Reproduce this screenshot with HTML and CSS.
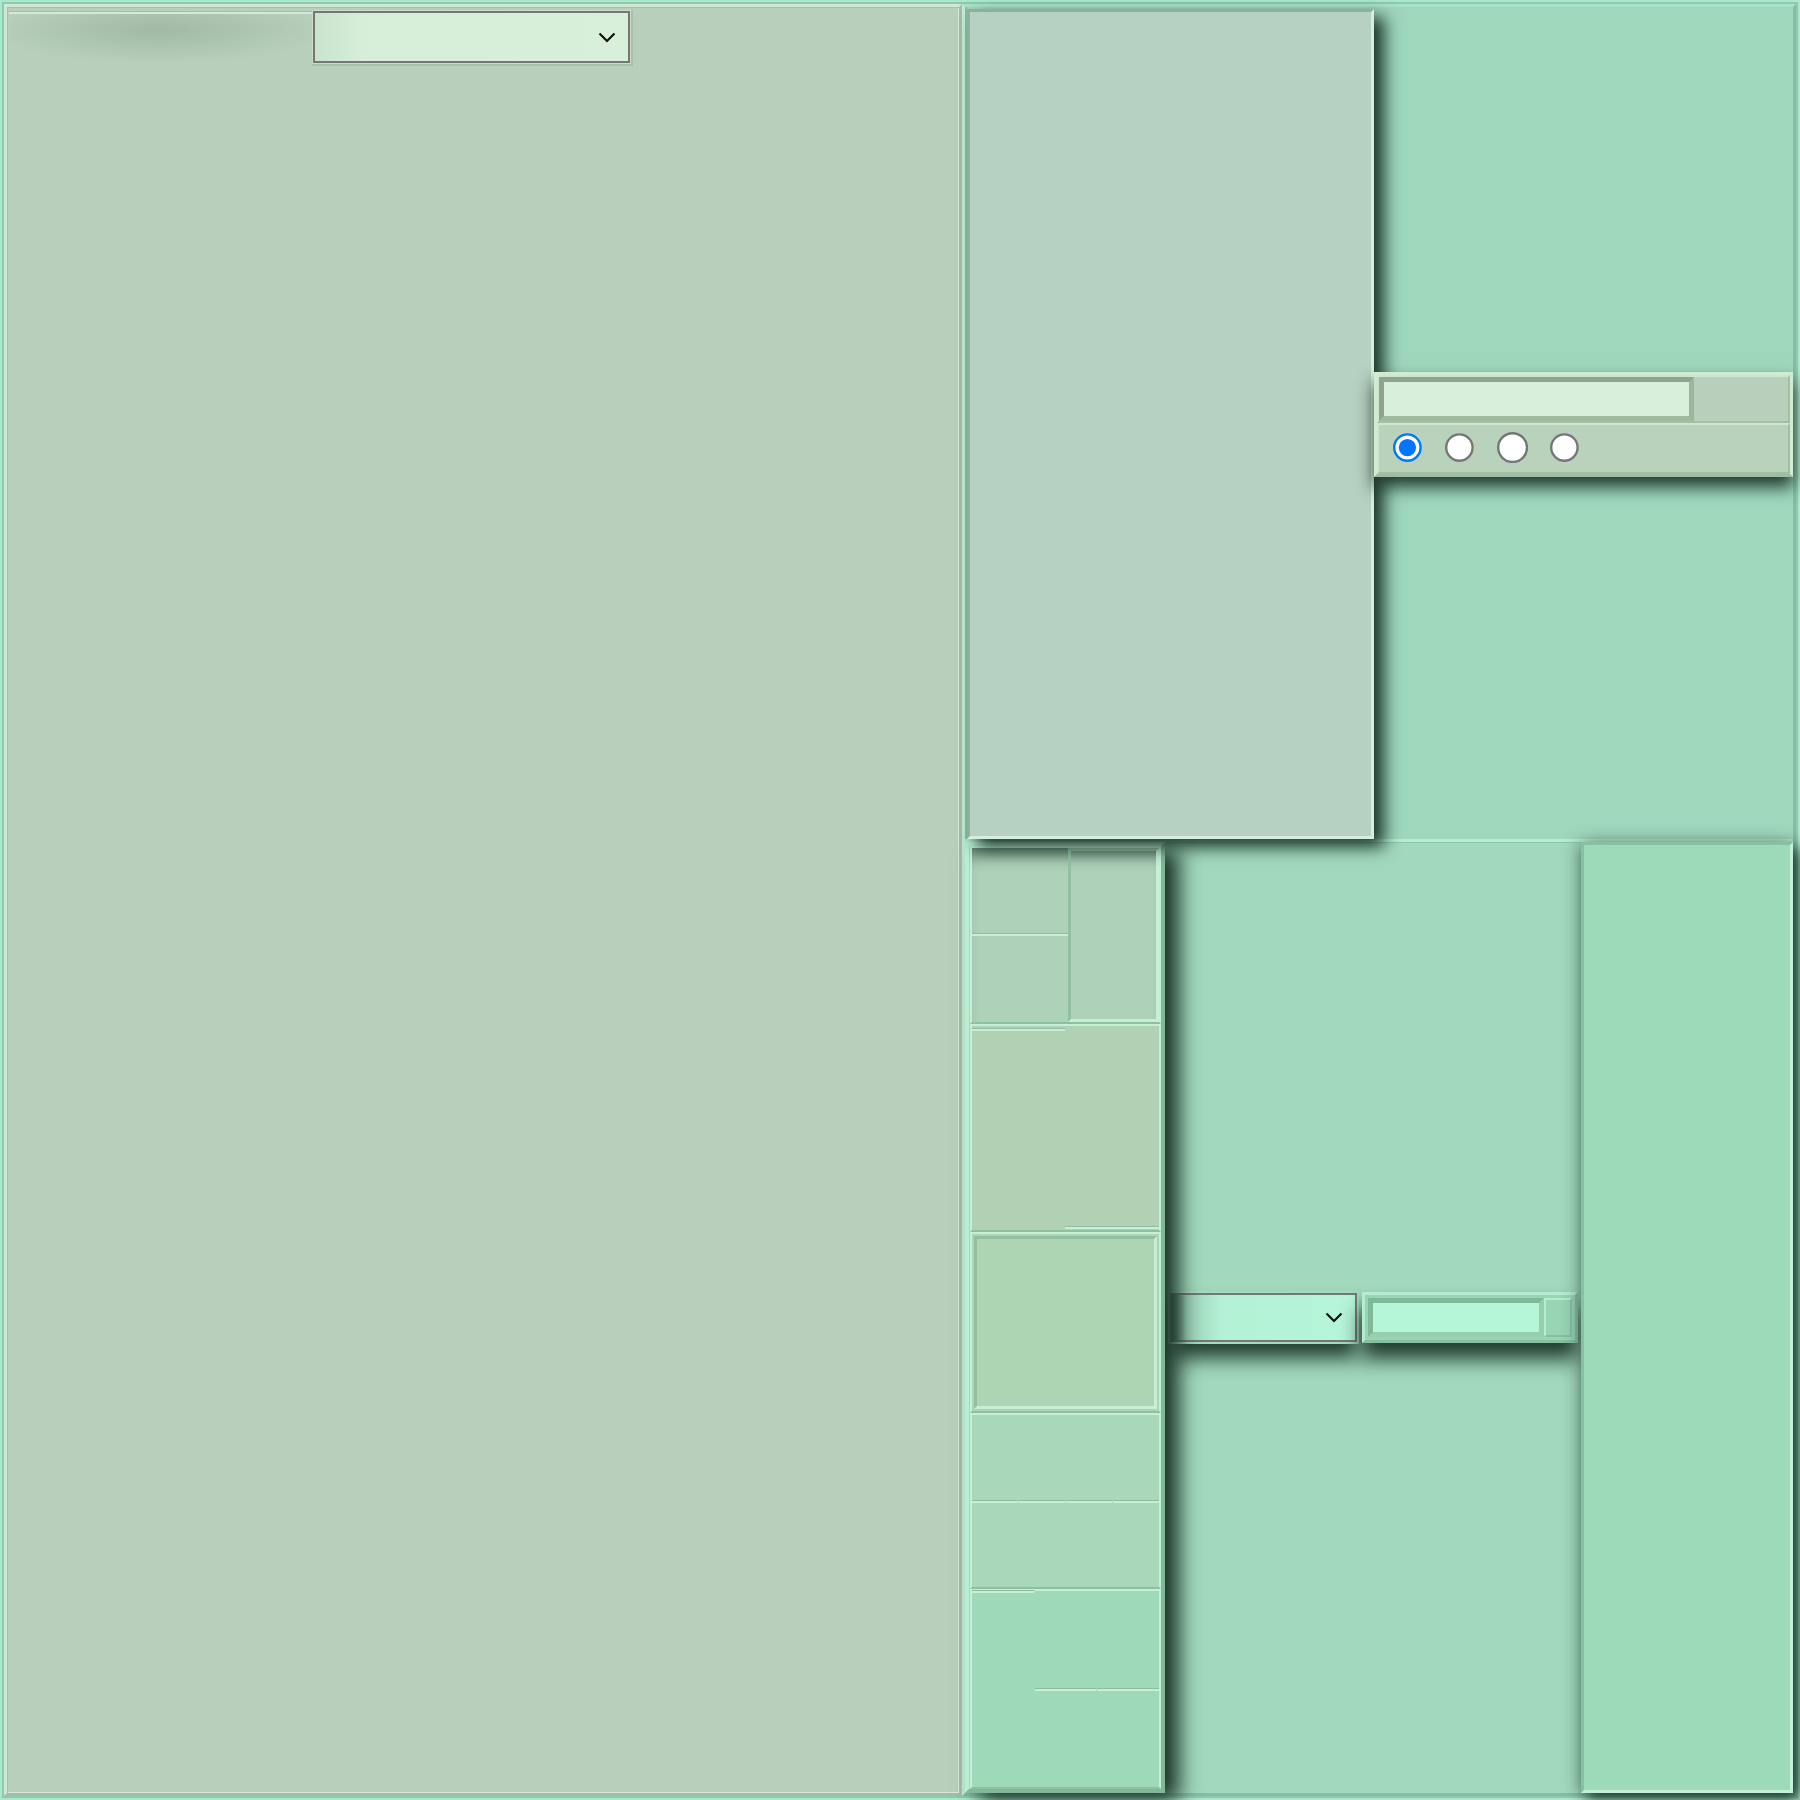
FILE: index.html
```html
<!DOCTYPE html>
<html>
<head>
<meta charset="utf-8">
<link rel="stylesheet" href="styles.css">
</head>
<body>
<div class="root">
  <section class="left">
    <div class="left-head">
      <div class="head-blank"></div>
      <div class="select select-a">
        <svg class="chev" width="18" height="11" viewBox="0 0 18 11"><path d="M1.5 1.5 L9 9 L16.5 1.5" fill="none" stroke="#111" stroke-width="2.2"/></svg>
      </div>
    </div>
  </section>
  <section class="right">
    <div class="right-top">
      <div class="panel-a"></div>
      <div class="widget">
        <div class="w-row w-row1">
          <div class="field field-a"></div>
          <div class="w-cell"></div>
        </div>
        <div class="w-row w-row2">
          <input class="radio" type="radio" name="r" checked>
          <input class="radio" type="radio" name="r">
          <input class="radio" type="radio" name="r">
          <input class="radio" type="radio" name="r">
        </div>
      </div>
    </div>
    <div class="right-bottom">
      <div class="stack">
        <div class="sa">
          <div class="sa-left">
            <div class="sa-cell"></div>
            <div class="sa-cell"></div>
          </div>
          <div class="sa-right"></div>
        </div>
        <div class="sb">
          <div class="mark mark-tl"></div>
          <div class="mark mark-br"></div>
        </div>
        <div class="sc"><div class="sc-inner"></div></div>
        <div class="sd">
          <div class="sd-top"></div>
          <div class="sd-bottom">
            <div class="seg"></div><div class="seg"></div><div class="seg"></div><div class="seg"></div>
          </div>
        </div>
        <div class="se">
          <div class="se-cell se-line"></div><div class="se-cell"></div><div class="se-cell"></div>
          <div class="se-cell"></div><div class="se-cell se-line"></div><div class="se-cell se-line"></div>
        </div>
      </div>
      <div class="mid">
        <div class="select select-b">
          <svg class="chev" width="18" height="11" viewBox="0 0 18 11"><path d="M1.5 1.5 L9 9 L16.5 1.5" fill="none" stroke="#111" stroke-width="2.2"/></svg>
        </div>
        <div class="iw">
          <div class="field field-b"></div>
          <div class="iw-cell"></div>
        </div>
      </div>
      <div class="tall"></div>
    </div>
  </section>
</div>
</body>
</html>
```

FILE: styles.css
```css
* { box-sizing: border-box; }
html, body { margin: 0; padding: 0; }
body { font-family: "Liberation Sans", Arial, sans-serif; background: #9fd8bd; }

.root {
  width: 1800px;
  height: 1800px;
  border: 2px solid #aae8cd;
  box-shadow: inset 0 0 0 2px #8ec8ad;
  padding: 2px;
  background: #9fd8bd;
  display: flex;
}

/* ---------- left ---------- */
.left {
  width: 958px;
  height: 100%;
  border: 3px solid;
  border-color: #cfe8d3 #a3bda7 #a3bda7 #cfe8d3;
  box-shadow: inset 1px 1px 0 #a6bfaa, inset -1px -1px 0 #d2ead6;
  background: #b8d0bb;
  padding: 4px 0 0 2px;
}
.left-head { display: flex; align-items: flex-start; }
.head-blank {
  width: 304px;
  height: 50px;
  border-top: 2px solid #d2ead6;
  box-shadow: 0 -1px 0 #a4bea8;
  margin-top: 1px;
  background: radial-gradient(ellipse 170px 34px at 150px 16px, rgba(150,178,160,0.75), rgba(150,178,160,0) 100%);
}
.select {
  display: flex;
  align-items: center;
  justify-content: flex-end;
  border: 2px solid #767676;
}
.select-a {
  width: 317px;
  height: 52px;
  padding-right: 12px;
  background: linear-gradient(90deg, #c9e3cd 0, #d7efd8 50px, #d8f0da 100%);
  box-shadow: 0 0 0 1px #c9dcc9, 1px 1px 0 2px #a9bfa9;
}

/* ---------- right ---------- */
.right {
  width: 834px;
  height: 100%;
  border: 3px solid;
  border-color: #a9e2c7 #84bea2 #84bea2 #c2ecd6;
  box-shadow: inset 2px 0 0 #86c2a5;
  display: flex;
  flex-direction: column;
  background: #9fd7bd;
}
.right-top {
  height: 832px;
  padding-top: 2px;
  padding-left: 2px;
  display: flex;
  align-items: center;
}
.panel-a {
  width: 407px;
  align-self: stretch;
  background: #b6d0c1;
  border: 3px solid;
  border-color: #8fae9c #d6efdd #d6efdd #8fae9c;
  box-shadow: 10px 8px 16px rgba(25, 50, 38, 1);
  position: relative;
  z-index: 2;
}
.widget {
  width: 419px;
  height: 105px;
  border: 3px solid;
  border-color: #d0ecd2 #d0ecd2 #a0bca4 #d0ecd2;
  background: #b8d2bb;
  box-shadow: 0 10px 16px rgba(25, 50, 38, 0.95);
  display: flex;
  flex-direction: column;
  position: relative;
  z-index: 3;
}
.w-row {
  border: 2px solid;
  border-color: #cde8cf #a4bea6 #a4bea6 #cde8cf;
  display: flex;
}
.w-row1 { height: 48px; }
.w-row2 {
  flex: 1;
  align-items: center;
  padding-left: 14px;
  gap: 21px;
}
.field {
  border: 5px solid;
  border-color: #8fa38f #9cb59c #a0baa0 #8fa38f;
}
.field-a {
  width: 315px;
  height: 100%;
  background: #d7efdb;
}
.w-cell { flex: 1; background: #b8d0bb; }
.radio {
  zoom: 2.4;
  margin: 0;
}

/* ---------- right bottom ---------- */
.right-bottom {
  flex: 1;
  display: flex;
  border-top: 3px solid #b6ecd4;
  box-shadow: inset 0 1px 0 #8fc6aa;
  background: #a2d9bc;
}
.stack {
  width: 200px;
  display: flex;
  flex-direction: column;
  border: 4px solid;
  border-color: #b8eed4 #80b898 #80b898 #b8eed4;
  padding-left: 1px;
  box-shadow: 14px 8px 20px rgba(25, 50, 38, 1);
  position: relative;
  z-index: 1;
}
.sa, .sb, .sc, .sd, .se {
  border: 2px solid;
  border-color: #c4f0d6 #c4f0d6 #8fbf9f #c4f0d6;
}
.sa {
  height: 178px;
  display: flex;
  background: #aed1b9;
  box-shadow: inset 0 16px 14px -8px rgba(40, 70, 55, 0.6);
}
.sa-left { width: 96px; display: flex; flex-direction: column; }
.sa-cell { flex: 1; }
.sa-cell + .sa-cell {
  border-top: 2px solid #c6efd6;
  box-shadow: 0 -1px 0 #90bea0;
}
.sa-right {
  flex: 1;
  border: 3px solid;
  border-color: #93bfa3 #c6efd6 #c6efd6 #93bfa3;
}
.sb {
  height: 208px;
  background: #b0d1b3;
  display: flex;
  flex-direction: column;
  justify-content: space-between;
}
.mark {
  width: 50%;
  border-top: 2px solid #c6efd6;
  box-shadow: 0 -1px 0 #90bea0;
}
.mark-tl { margin-top: 3px; }
.mark-br { align-self: flex-end; margin-bottom: 1px; }
.sc {
  height: 181px;
  background: #add4b3;
  padding: 2px;
}
.sc-inner {
  height: 100%;
  border: 3px solid;
  border-color: #93bfa0 #c6efd6 #c6efd6 #93bfa0;
}
.sd {
  height: 176px;
  background: #a8d7b9;
  display: flex;
  flex-direction: column;
}
.sd-top { flex: 1; }
.sd-bottom { flex: 1; display: flex; gap: 1px; }
.seg {
  flex: 1;
  border-top: 2px solid #c6efd6;
  box-shadow: 0 -1px 0 #8cbc9c;
}
.se {
  flex: 1;
  background: #9ed9b9;
  display: grid;
  grid-template-columns: 1fr 1fr 1fr;
  grid-template-rows: 1fr 1fr;
  column-gap: 1px;
}
.se-line {
  border-top: 2px solid #c6efd6;
  box-shadow: 0 -1px 0 #8cbc9c;
}

.mid {
  flex: 1;
  display: flex;
  align-items: center;
  padding: 0 3px 0 5px;
  gap: 5px;
}
.select-b {
  width: 187px;
  height: 49px;
  padding-right: 12px;
  background: linear-gradient(90deg, #4d6e5e 0, #9ccfb5 14px, #b4f2d6 50px, #b5f5d8 100%);
  box-shadow: 0 0 0 2px #9fdcc0, 0 16px 20px rgba(25, 50, 38, 0.95);
}
.iw {
  width: 216px;
  height: 51px;
  display: flex;
  border: 3px solid;
  border-color: #b4ecd0 #86c0a2 #86c0a2 #b4ecd0;
  padding: 3px;
  background: #98d4b6;
  box-shadow: 0 16px 20px rgba(25, 50, 38, 0.95);
}
.field-b {
  width: 176px;
  height: 100%;
  background: #b5f5d8;
  border-color: #80b898 #96cfae #96cfae #80b898;
}
.iw-cell {
  flex: 1;
  border: 2px solid;
  border-color: #b6ecd2 #86c0a2 #86c0a2 #b6ecd2;
  background: #97d5b5;
}
.tall {
  width: 213px;
  background: #9ddab9;
  border: 3px solid;
  border-color: #86c2a2 #c0f2da #c0f2da #86c2a2;
  box-shadow: -4px 0 16px rgba(25, 50, 38, 0.3), 6px 6px 14px rgba(25, 50, 38, 0.95);
  position: relative;
}
```
